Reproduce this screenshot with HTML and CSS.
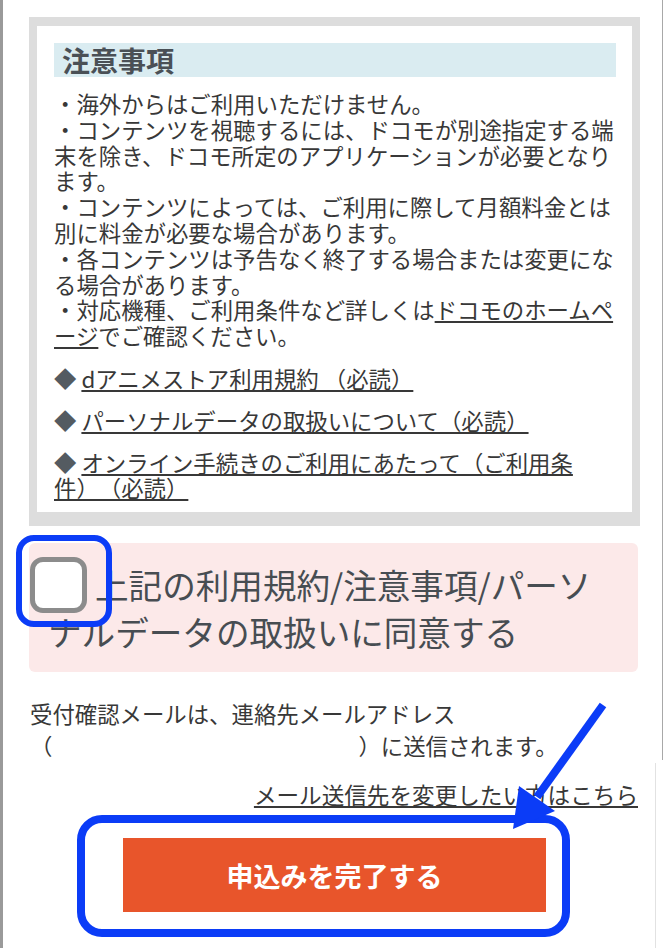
FILE: index.html
```html
<!DOCTYPE html>
<html lang="ja">
<head>
    <meta charset="UTF-8">
    <meta name="viewport" content="width=device-width, initial-scale=1.0">
    <title>お申込み内容の確認</title>
    <link rel="stylesheet" href="styles.css">
</head>
<body>
    <div class="page">
        <section class="notice">
            <h2 class="notice-title">注意事項</h2>
            <p class="notice-text">・海外からはご利用いただけません。<br>・コンテンツを視聴するには、ドコモが別途指定する端末を除き、ドコモ所定のアプリケーションが必要となります。<br>・コンテンツによっては、ご利用に際して月額料金とは別に料金が必要な場合があります。<br>・各コンテンツは予告なく終了する場合または変更になる場合があります。<br>・対応機種、ご利用条件など詳しくは<a href="#">ドコモのホームページ</a>でご確認ください。</p>
            <ul class="notice-links">
                <li><a href="#">dアニメストア利用規約 （必読）</a></li>
                <li><a href="#">パーソナルデータの取扱いについて（必読）</a></li>
                <li><a href="#">オンライン手続きのご利用にあたって（ご利用条件）（必読）</a></li>
            </ul>
        </section>

        <label class="agree"><span class="checkbox"></span>上記の利用規約/注意事項/パーソナルデータの取扱いに同意する</label>

        <p class="mail-note">受付確認メールは、連絡先メールアドレス<span class="addr">（<span class="addr-blank"></span>）</span>に送信されます。</p>
        <p class="mail-change"><a href="#">メール送信先を変更したい方はこちら</a></p>

        <div class="submit-row">
            <button type="button" class="submit">申込みを完了する</button>
        </div>
    </div>

    <!-- annotation marks drawn over the page -->
    <svg class="marks" width="666" height="948" viewBox="0 0 666 948">
        <line x1="662.5" y1="0" x2="662.5" y2="760" stroke="#a8a8a8" stroke-width="1"/>
        <line x1="655.5" y1="763" x2="655.5" y2="948" stroke="#e2e2e2" stroke-width="1"/>
        <rect x="19" y="538" width="90" height="86" rx="15" fill="none" stroke="#0b3cf7" stroke-width="6"/>
        <rect x="81" y="819" width="485" height="114" rx="21" fill="none" stroke="#0b3cf7" stroke-width="8"/>
        <line x1="603" y1="705" x2="537" y2="797" stroke="#0b3cf7" stroke-width="8"/>
        <polygon points="513,829 519,786 555,811" fill="#0b3cf7"/>
    </svg>
</body>
</html>
```

FILE: styles.css
```css
body {
    margin: 0;
    padding: 0;
    position: relative;
    font-family: "Noto Sans CJK JP", sans-serif;
    color: #383838;
    background-color: #fff;
    text-spacing-trim: space-all;
}
a {
    color: inherit;
}
.page {
    height: 948px;
    box-sizing: border-box;
    border-left: 3px solid #9a9a9a;
    padding: 17px 26px 0 26px;
    overflow: hidden;
}
.notice {
    border: 8px solid #dddddd;
    border-top-width: 9px;
    border-bottom-width: 14px;
    padding: 17px 16px 11px 17px;
}
.notice-title {
    margin: 0;
    padding: 0 8px;
    height: 34px;
    background-color: #daecf1;
    font-size: 28px;
    line-height: 34px;
    font-weight: bold;
    color: #4a5056;
}
.notice-text {
    margin: 14px 0 0;
    font-size: 22.4px;
    line-height: 25.8px;
}
.notice-links {
    list-style: none;
    margin: 17px 0 0;
    padding: 0;
    font-size: 22.4px;
    line-height: 25.8px;
}
.notice-links li {
    margin-top: 16px;
}
.notice-links li:first-child {
    margin-top: 0;
}
.notice-links li::before {
    content: "◆ ";
    color: #545b61;
}
.agree {
    display: block;
    margin: 17px 2px 0 0;
    padding: 17.5px 19px;
    background-color: #fce9e9;
    border-radius: 6px;
    font-size: 33.6px;
    line-height: 47px;
    color: #474d52;
}
.checkbox {
    display: inline-block;
    box-sizing: border-box;
    width: 57px;
    height: 56px;
    margin: -6px 8px -6px -18px;
    vertical-align: -8px;
    border: 5px solid #8c8c8c;
    border-radius: 13px;
    background-color: #fff;
}
.mail-note {
    margin: 25px 0 0;
    padding-left: 1px;
    font-size: 22.4px;
    line-height: 32px;
}
.addr {
    white-space: nowrap;
}
.addr-blank {
    display: inline-block;
    width: 306px;
}
.mail-change {
    margin: 18px 0 0;
    padding-right: 2px;
    text-align: right;
    font-size: 22.6px;
    line-height: 32px;
}
.submit-row {
    margin-top: 27px;
    text-align: center;
}
.submit {
    width: 423px;
    height: 74px;
    border: none;
    background-color: #e8552b;
    color: #fff;
    font-family: "Noto Sans CJK JP", sans-serif;
    font-size: 27px;
    font-weight: bold;
    cursor: pointer;
}
.marks {
    position: absolute;
    top: 0;
    left: 0;
    pointer-events: none;
}
```
